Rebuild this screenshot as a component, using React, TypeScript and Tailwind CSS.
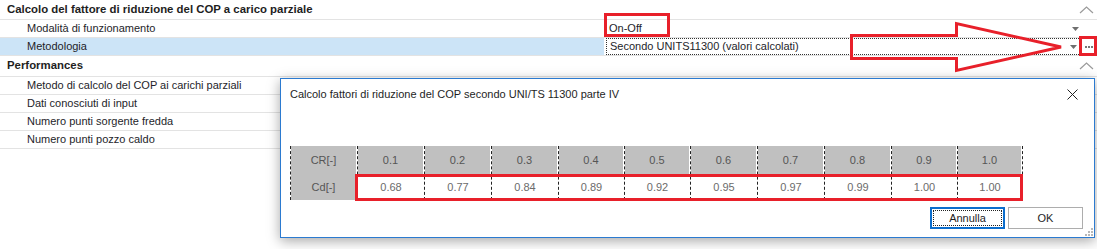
import React from 'react';

const font = "font-['Liberation_Sans',Arial,sans-serif]";

const Chevron = () => (
  <svg width="15" height="8" viewBox="0 0 15 8" className="block">
    <polyline points="1,7 7.5,1 14,7" fill="none" stroke="#9b9b9b" strokeWidth="1.2" />
  </svg>
);

const DropArrow = () => (
  <svg width="7" height="4" viewBox="0 0 7 4" className="block">
    <polygon points="0,0 7,0 3.5,4" fill="#6f6f6f" />
  </svg>
);

const Category = ({ label, height }: { label: string; height: string }) => (
  <div className={`flex items-center justify-between pl-[7px] pr-[3px] font-bold text-[11.4px] text-[#1e1e1e] ${height}`}>
    <span>{label}</span>
    <Chevron />
  </div>
);

const Row = ({ label, children, selected }: { label: string; children?: React.ReactNode; selected?: boolean }) => (
  <div className="flex h-[18px] border-t border-[#e3e3e3]">
    <div className={`w-[604px] shrink-0 pl-[27px] flex items-center ${selected ? 'bg-[#cce4f7]' : ''}`}>{label}</div>
    <div className="flex-1 flex items-center">{children}</div>
  </div>
);

const columns = [
  { cr: '0.1', cd: '0.68', w: 'w-[67px]' },
  { cr: '0.2', cd: '0.77', w: 'w-[67px]' },
  { cr: '0.3', cd: '0.84', w: 'w-[67px]' },
  { cr: '0.4', cd: '0.89', w: 'w-[66px]' },
  { cr: '0.5', cd: '0.92', w: 'w-[66px]' },
  { cr: '0.6', cd: '0.95', w: 'w-[67px]' },
  { cr: '0.7', cd: '0.97', w: 'w-[67px]' },
  { cr: '0.8', cd: '0.99', w: 'w-[67px]' },
  { cr: '0.9', cd: '1.00', w: 'w-[66px]' },
  { cr: '1.0', cd: '1.00', w: 'w-[66px]' },
];

export default function App() {
  return (
    <div className={`relative w-[1097px] h-[249px] overflow-hidden bg-white text-[11px] text-[#1e1e2a] ${font}`}>
      {/* property grid */}
      <div className="flex flex-col">
        <Category label="Calcolo del fattore di riduzione del COP a carico parziale" height="h-[19px]" />
        <Row label="Modalità di funzionamento">
          <span className="pl-[5px] flex-1">On-Off</span>
          <span className="mr-[18px]"><DropArrow /></span>
        </Row>
        <Row label="Metodologia" selected>
          <div className="flex-1 h-full flex items-center border border-dotted border-[#333] ml-[2px] pl-[3px]">
            <span className="flex-1">Secondo UNITS11300 (valori calcolati)</span>
            <span className="mr-[3px]"><DropArrow /></span>
          </div>
          <div className="w-[16px] flex items-center justify-center gap-[1px]">
            <span className="w-[2px] h-[2px] bg-[#777]" />
            <span className="w-[2px] h-[2px] bg-[#777]" />
            <span className="w-[2px] h-[2px] bg-[#777]" />
          </div>
        </Row>
        <div className="border-t border-[#e3e3e3]">
          <Category label="Performances" height="h-[20px]" />
        </div>
        <Row label="Metodo di calcolo del COP ai carichi parziali" />
        <Row label="Dati conosciuti di input" />
        <Row label="Numero punti sorgente fredda" />
        <Row label="Numero punti pozzo caldo" />
        <div className="border-t border-[#e3e3e3]" />
      </div>

      {/* red annotations */}
      <div className="absolute left-[604px] top-[13px] w-[66px] h-[24px] border-[3px] border-[#e8202a]" />
      <div className="absolute left-[1079px] top-[36px] w-[18px] h-[20px] border-[3px] border-[#e8202a]" />
      <svg className="absolute left-0 top-0" width="1097" height="80" viewBox="0 0 1097 80">
        <polygon
          points="851.5,35.5 956.5,35.5 956.5,23.5 1061,47 956.5,70.5 956.5,58.5 851.5,58.5"
          fill="none"
          stroke="#e8202a"
          strokeWidth="3"
        />
      </svg>

      {/* dialog */}
      <div className="absolute left-[280px] top-[78px] w-[815px] h-[160px] bg-white border border-[#2b7ad0] shadow-[0_3px_12px_rgba(0,0,0,0.35)]">
        <div className="h-[31px] flex items-center justify-between pl-[9px] pr-[16px]">
          <span className="text-[11px] text-[#1e1e1e]">Calcolo fattori di riduzione del COP secondo UNI/TS 11300 parte IV</span>
          <svg width="11" height="11" viewBox="0 0 11 11" className="block">
            <path d="M0.5 0.5 L10.5 10.5 M10.5 0.5 L0.5 10.5" stroke="#222" strokeWidth="1" />
          </svg>
        </div>

        <div className="mt-[36px] ml-[9px] flex text-[11px]">
          <div className="w-[67px] flex flex-col border-l border-dashed border-[#222]">
            <div className="h-[28px] mr-px bg-[#c0c0c0] text-[#555] flex items-center justify-center">CR[-]</div>
            <div className="h-[26px] mr-px bg-[#c0c0c0] text-[#555] flex items-center justify-center">Cd[-]</div>
          </div>
          {columns.map((c, i) => (
            <div
              key={c.cr}
              className={`${c.w} flex flex-col border-l border-dashed border-[#222] ${i === columns.length - 1 ? 'border-r' : ''}`}
            >
              <div className="h-[28px] mr-px bg-[#c0c0c0] text-[#555] flex items-center justify-center">{c.cr}</div>
              <div className="h-[26px] text-[#6b6b6b] flex items-center justify-center">{c.cd}</div>
            </div>
          ))}
        </div>

        <div className="absolute left-[74px] top-[95px] w-[668px] h-[27px] border-[3px] border-[#e8202a]" />

        <div className="mt-[7px] flex justify-end gap-[3px] pr-[11px]">
          <button className="w-[75px] h-[22px] border-2 border-[#0b6dcc] bg-white p-px">
            <span className="flex h-full items-center justify-center border border-dotted border-[#222] text-[#1e1e1e]">Annulla</span>
          </button>
          <button className="w-[75px] h-[22px] border border-[#adadad] bg-white text-[#1e1e1e] flex items-center justify-center">OK</button>
        </div>

        <svg className="absolute right-[1px] bottom-[1px]" width="9" height="9" viewBox="0 0 9 9">
          <rect x="7" y="1" width="2" height="2" fill="#b8b8b8" />
          <rect x="4" y="4" width="2" height="2" fill="#b8b8b8" />
          <rect x="7" y="4" width="2" height="2" fill="#b8b8b8" />
          <rect x="1" y="7" width="2" height="2" fill="#b8b8b8" />
          <rect x="4" y="7" width="2" height="2" fill="#b8b8b8" />
          <rect x="7" y="7" width="2" height="2" fill="#b8b8b8" />
        </svg>
      </div>
    </div>
  );
}
